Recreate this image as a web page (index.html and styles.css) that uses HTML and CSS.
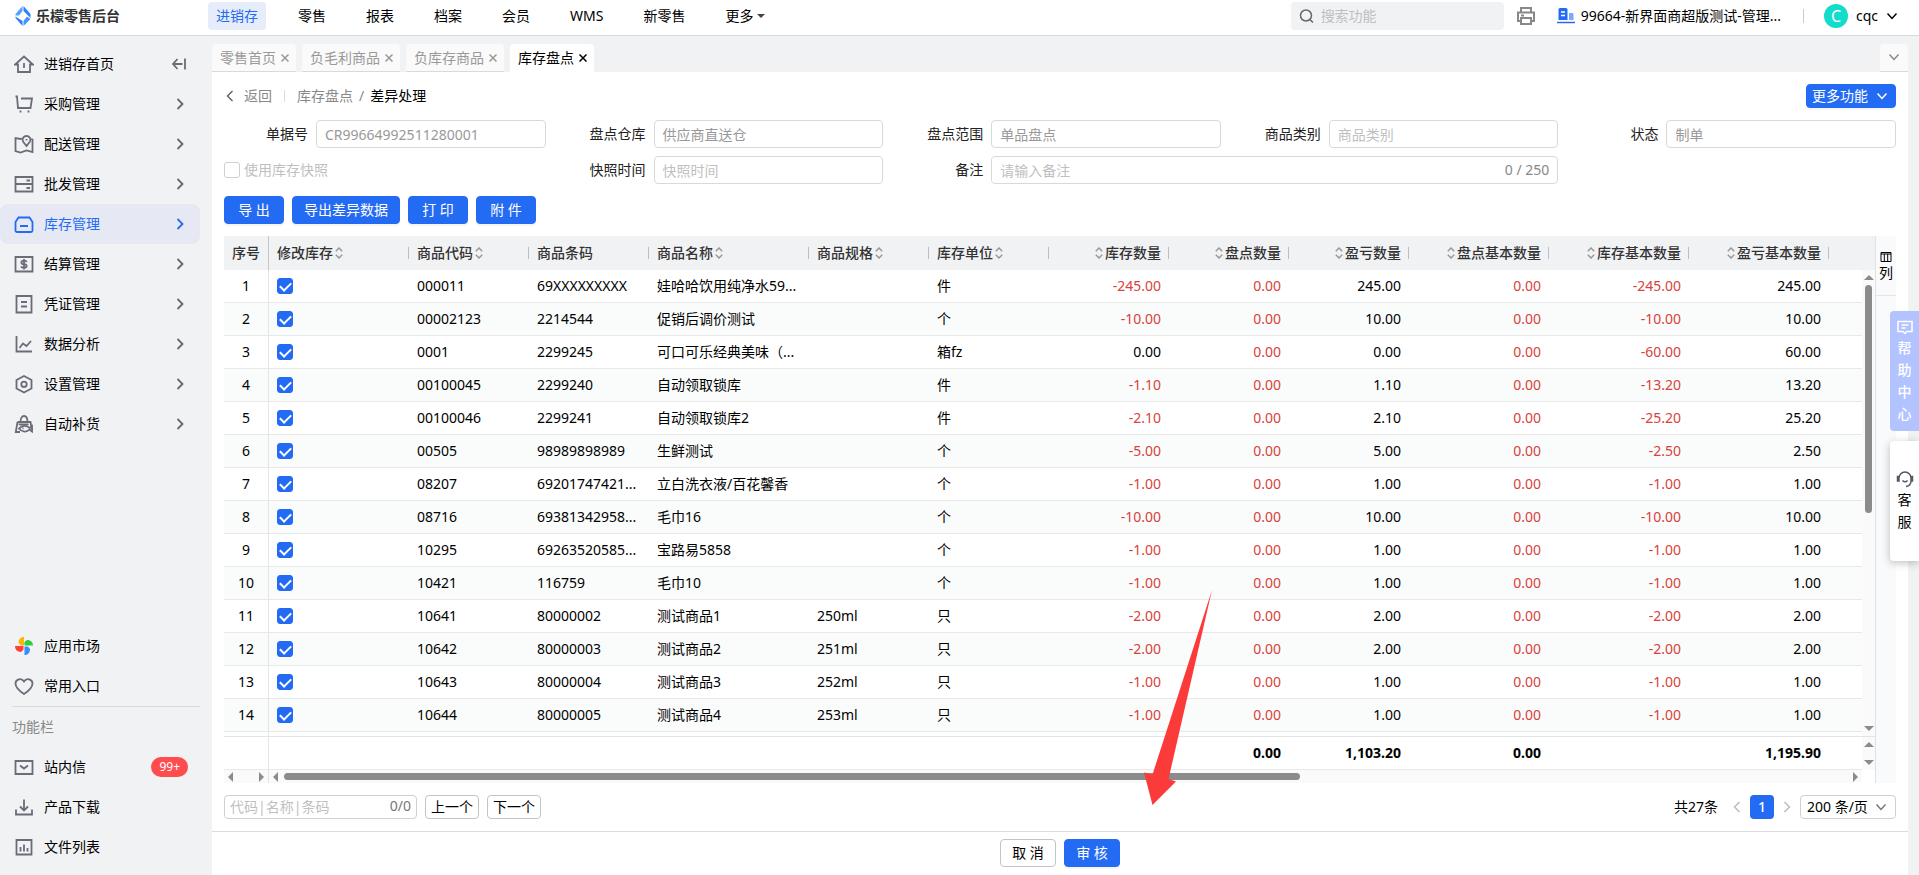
FILE: index.html
```html
<!DOCTYPE html>
<html lang="zh-CN">
<head>
<meta charset="utf-8">
<title>乐檬零售后台</title>
<link rel="stylesheet" href="styles.css">
</head>
<body>

<!-- 图标 -->
<svg class="sprite" aria-hidden="true">
    <symbol id="i-home" viewBox="0 0 20 20"><path d="M1 10.500h3V18h12v-7.500h3L10 2.500ZM10 9v5"/></symbol>
    <symbol id="i-cart" viewBox="0 0 20 20"><path d="M1.500 2.500H3L4 14H16.500L18 4.500H7"/><path d="M6.500 16.500v2M14.500 16.500v2"/></symbol>
    <symbol id="i-map" viewBox="0 0 20 20"><path d="M8 4.500 6.500 5 1.500 4v13l5 1.500 6-2 6 1.500V5.500L16.500 5M12.500 12 9 7.500C7.500 4.500 10 2 12.500 2S17.500 4.500 16 7.500L12.500 12ZM12.500 5v1.500"/></symbol>
    <symbol id="i-server" viewBox="0 0 20 20"><path d="M1.500 3h17v14.500h-17ZM1.500 10h17M12.500 6.500H16M12.500 14H16"/></symbol>
    <symbol id="i-box" viewBox="0 0 20 20"><path d="M4.500 3.500h11L18.500 8V16.500a1.500 1.500 0 0 1-1.500 1.500H3A1.500 1.500 0 0 1 1.500 16.500V8ZM6 12h8"/></symbol>
    <symbol id="i-money" viewBox="0 0 20 20"><path d="M1.500 3h17v14.500h-17ZM12.800 8c-.5-1-1.500-1.300-2.800-1.300-3.500 0-3.500 3.300 0 3.500 3.500.2 3.500 3.600 0 3.600-1.500 0-2.500-.5-3-1.500M10 5v10.500"/></symbol>
    <symbol id="i-doc" viewBox="0 0 20 20"><path d="M2.500 2h15v16.500h-15ZM7 8h6M7 12.500h6"/></symbol>
    <symbol id="i-chart" viewBox="0 0 20 20"><path d="M2.500 2v15.500H18M5.500 14 9 9.500l3.500 2.500L17 7"/></symbol>
    <symbol id="i-set" viewBox="0 0 20 20"><path d="M10 2l7.500 4v8.500L10 18.500 2.500 14.500V6Z"/><circle cx="10" cy="10.300" r="2.700"/></symbol>
    <symbol id="i-bag" viewBox="0 0 20 20"><path d="M3.500 8h13l1.500 8.500M3.500 8 1.800 18H6M6.500 8C6.500 0 13.500 0 13.500 8M5.500 11v-.5h9"/><path d="M5 14.500c3-3.500 8-3.500 10.500-.5l2.500-2v5.500l-2.500-2c-2.500 3-7.500 3-10.500-1ZM8.500 14.300h1"/></symbol>
    <symbol id="i-heart" viewBox="0 0 20 20"><path d="M10 18C4 14 1.500 11 1.500 7.500 1.500 3 7.500 1.500 10 5.500c2.500-4 8.500-2.500 8.500 2 0 3.500-2.500 6.500-8.500 10.500Z"/></symbol>
    <symbol id="i-mail" viewBox="0 0 20 20"><path d="M1.500 4h17v13h-17ZM6 8.500l4 3 4-3"/></symbol>
    <symbol id="i-down" viewBox="0 0 20 20"><path d="M10 2.500V13M6 9.500l4 4 4-4M2 12.500V17.500h16v-5"/></symbol>
    <symbol id="i-file" viewBox="0 0 20 20"><path d="M2.500 3h15v14.500h-15ZM6.500 10v4.500M10 7.500v7M13.500 11v3.500"/></symbol>
    <symbol id="i-right" viewBox="0 0 10 12"><path d="M2.500 1 7.500 6l-5 5"/></symbol>
    <symbol id="i-left" viewBox="0 0 10 12"><path d="M7.500 1l-5 5 5 5"/></symbol>
    <symbol id="i-bottom" viewBox="0 0 12 12"><path d="M1.500 3.500 6 8.500l4.500-5"/></symbol>
    <symbol id="i-x" viewBox="0 0 8 8"><path d="M.5.5l7 7M7.500.5l-7 7"/></symbol>
    <symbol id="i-sort" viewBox="0 0 8 12"><path d="M.8 4.200 4 1l3.200 3.200M.8 7.800 4 11l3.200-3.200"/></symbol>
</svg>

<header class="header">
    <div class="logo">
        <svg class="logo-icon" viewBox="0 0 16 20"><path fill="#55a2ff" d="M7.500 0v5L4 9.500H.5V8Z"/><path fill="#2f7ff8" d="M8.500 0 15.500 8v4L8.500 5Z"/><path fill="#2f7ff8" d="M.5 10.500 7.500 15v5L.5 12Z"/><path fill="#4496ff" d="M15.500 13 8.500 20v-5L12 10.500Z"/></svg>
        <strong>乐檬零售后台</strong>
    </div>
    <nav class="nav">
        <a href="#" class="active">进销存</a>
        <a href="#">零售</a>
        <a href="#">报表</a>
        <a href="#">档案</a>
        <a href="#">会员</a>
        <a href="#">WMS</a>
        <a href="#">新零售</a>
        <a href="#">更多<i class="caret"></i></a>
    </nav>
    <label class="search">
        <svg class="icon-16 line" viewBox="0 0 16 16"><circle cx="7" cy="7.500" r="5.500"/><path d="m11 11.500 3 3"/></svg>
        <input type="text" placeholder="搜索功能" aria-label="搜索功能">
    </label>
    <button class="printer" aria-label="打印"><svg viewBox="0 0 20 20"><path d="M5 6.500V2h10v4.500M5 15H2V6.500h16V15h-3M5 12h10v6H5ZM5 9.500h3"/></svg></button>
    <a href="#" class="org">
        <svg class="org-icon" viewBox="0 0 18 16"><path fill="#246bf3" d="M1.500 1.500Q1.500 0 3 0h6q1.500 0 1.500 1.500V12h-9Z"/><path stroke="#fff" stroke-width="1.500" d="M4 4h4M4 7.500h4"/><path fill="#7da8fa" d="M12 5h3.500q1 0 1 1v6H12Z"/><path stroke="#246bf3" stroke-width="1.500" d="M0 14.500h18"/></svg>
        99664-新界面商超版测试-管理...
    </a>
    <span class="header-line"></span>
    <button class="user"><span class="avatar">C</span>cqc<svg class="icon-12 line" aria-hidden="true"><use href="#i-bottom"/></svg></button>
</header>

<div class="layout">
    <aside class="side">
        <nav class="menu">
            <a href="#"><svg><use href="#i-home"/></svg>进销存首页<svg class="fold" viewBox="0 0 14 12"><path d="M5.500 1 1 6l4.500 5M1 6h9.500M13 .5v11"/></svg></a>
            <a href="#"><svg><use href="#i-cart"/></svg>采购管理<svg class="arrow"><use href="#i-right"/></svg></a>
            <a href="#"><svg><use href="#i-map"/></svg>配送管理<svg class="arrow"><use href="#i-right"/></svg></a>
            <a href="#"><svg><use href="#i-server"/></svg>批发管理<svg class="arrow"><use href="#i-right"/></svg></a>
            <a href="#" class="active"><svg><use href="#i-box"/></svg>库存管理<svg class="arrow"><use href="#i-right"/></svg></a>
            <a href="#"><svg><use href="#i-money"/></svg>结算管理<svg class="arrow"><use href="#i-right"/></svg></a>
            <a href="#"><svg><use href="#i-doc"/></svg>凭证管理<svg class="arrow"><use href="#i-right"/></svg></a>
            <a href="#"><svg><use href="#i-chart"/></svg>数据分析<svg class="arrow"><use href="#i-right"/></svg></a>
            <a href="#"><svg><use href="#i-set"/></svg>设置管理<svg class="arrow"><use href="#i-right"/></svg></a>
            <a href="#"><svg><use href="#i-bag"/></svg>自动补货<svg class="arrow"><use href="#i-right"/></svg></a>
        </nav>
        <nav class="menu menu-bottom">
            <a href="#"><svg class="market" viewBox="0 0 20 20"><path fill="#ffb400" d="M10 1v8.500H7L4.500 7C4.500 3 7 1 10 1Z"/><path fill="#2ecc40" d="M19 9.500h-8.500V6L13 4c4 0 6 2.500 6 5.500Z"/><path fill="#3d8bff" d="M10.500 19v-8.500H14l2 2.500c0 4-2.500 6-5.500 6Z"/><path fill="#ff4038" d="M1 10h8.500v3.500L7 16c-4 0-6-3-6-6Z"/></svg>应用市场</a>
            <a href="#"><svg><use href="#i-heart"/></svg>常用入口</a>
            <p class="menu-title">功能栏</p>
            <a href="#"><svg><use href="#i-mail"/></svg>站内信<span class="badge">99+</span></a>
            <a href="#"><svg><use href="#i-down"/></svg>产品下载</a>
            <a href="#"><svg><use href="#i-file"/></svg>文件列表</a>
        </nav>
    </aside>

    <main class="main">
        <div class="tabs">
            <a href="#">零售首页<svg><use href="#i-x"/></svg></a>
            <a href="#">负毛利商品<svg><use href="#i-x"/></svg></a>
            <a href="#">负库存商品<svg><use href="#i-x"/></svg></a>
            <a href="#" class="active">库存盘点<svg><use href="#i-x"/></svg></a>
            <button class="tabs-more" aria-label="更多标签"><svg class="icon-12 line"><use href="#i-bottom"/></svg></button>
        </div>

        <div class="panel">
            <div class="crumb">
                <a href="#" class="back"><svg><use href="#i-left"/></svg>返回</a>
                <span class="crumb-line"></span>
                <a href="#">库存盘点</a>
                <span>/</span>
                <b>差异处理</b>
                <button class="btn btn-primary btn-more">更多功能<svg class="icon-12 line"><use href="#i-bottom"/></svg></button>
            </div>

            <form class="form">
                <div class="field"><label for="no">单据号</label><input id="no" type="text" value="CR99664992511280001" disabled></div>
                <div class="field"><label for="store">盘点仓库</label><input id="store" type="text" value="供应商直送仓" disabled></div>
                <div class="field"><label for="range">盘点范围</label><input id="range" type="text" value="单品盘点" disabled></div>
                <div class="field"><label for="cate">商品类别</label><input id="cate" type="text" placeholder="商品类别" disabled></div>
                <div class="field"><label for="state">状态</label><input id="state" type="text" value="制单" disabled></div>
                <label class="snap"><input type="checkbox" disabled>使用库存快照</label>
                <div class="field"><label for="time">快照时间</label><input id="time" type="text" placeholder="快照时间" disabled></div>
                <div class="field field-wide"><label for="memo">备注</label><div class="counter"><input id="memo" type="text" placeholder="请输入备注"><span>0 / 250</span></div></div>
            </form>

            <div class="tools">
                <button class="btn btn-primary">导 出</button>
                <button class="btn btn-primary">导出差异数据</button>
                <button class="btn btn-primary">打 印</button>
                <button class="btn btn-primary">附 件</button>
            </div>

            <div class="grid">
                <div class="grid-main">
                    <div class="grid-view">
                        <table class="table">
                            <colgroup id="cols"></colgroup>
                            <thead><tr id="head"></tr></thead>
                            <tbody id="rows"></tbody>
                        </table>
                        <div class="vbar"><i class="tri up"></i><span class="thumb-v"></span><i class="tri down"></i></div>
                    </div>
                    <div class="grid-sum">
                        <table class="table">
                            <colgroup id="sumCols"></colgroup>
                            <tbody><tr id="sum"></tr></tbody>
                        </table>
                        <div class="vbar"><i class="tri up"></i><i class="tri down"></i></div>
                    </div>
                    <div class="hbar">
                        <div class="hbar-no"><i class="tri left"></i><i class="tri right"></i></div>
                        <div class="hbar-body"><i class="tri left"></i><div class="track"><span class="thumb-h"></span></div><i class="tri right"></i></div>
                    </div>
                </div>
                <div class="grid-side">
                    <button><svg viewBox="0 0 12 12"><path d="M1 1.500h10v9H1ZM1 3h10M4.300 3v7M7.700 3v7"/></svg>列</button>
                </div>
            </div>

            <div class="pager">
                <label class="find"><input type="text" placeholder="代码|名称|条码" aria-label="代码|名称|条码"><span>0/0</span></label>
                <button class="btn btn-small">上一个</button>
                <button class="btn btn-small">下一个</button>
                <span class="total">共27条</span>
                <button class="page-arrow" aria-label="上一页"><svg><use href="#i-left"/></svg></button>
                <button class="page-no">1</button>
                <button class="page-arrow" aria-label="下一页"><svg><use href="#i-right"/></svg></button>
                <div class="page-size">
                    <select aria-label="每页条数"><option>200 条/页</option></select>
                    <svg class="icon-12 line"><use href="#i-bottom"/></svg>
                </div>
            </div>
        </div>

        <footer class="footer">
            <button class="btn">取 消</button>
            <button class="btn btn-primary">审 核</button>
        </footer>
    </main>
</div>

<div class="float">
    <a href="#" class="help"><svg viewBox="0 0 18 18"><path d="M2 3.500h14v10h-5L9 15.500l-2-2H2ZM5.500 7h7M5.500 10h4"/></svg><span>帮</span><span>助</span><span>中</span><span>心</span></a>
    <a href="#" class="service"><svg viewBox="0 0 18 18"><path d="M3 11V8a6 6 0 0 1 12 0v3c0 3-2 5-5 5.500M3 6.500H1.500v4.500H3ZM15 6.500h1.500v4.500H15ZM6.500 10.500c1.500 1.500 3.500 1.500 5 0"/></svg><span>客</span><span>服</span></a>
</div>

<!-- 指向审核按钮的箭头 -->
<svg class="pointer" viewBox="0 0 32 215"><path fill="#fb3a3a" d="M68 0 24.500 189 32 191.500 8.500 215 0 182.500l8.500 2Z"/></svg>

<script src="script.js"></script>
</body>
</html>
```
FILE: styles.css
```css
*{
    box-sizing: border-box;
}
body{
    margin: 0;
    height: 100vh;
    display: flex;
    flex-direction: column;
    overflow: hidden;
    position: relative;
    background-color: #f1f2f4;
    color: #000;
    font-family: "Noto Sans", "Noto Sans CJK SC", sans-serif;
    font-size: 14px;
    line-height: 20px;
}
a{
    color: inherit;
    text-decoration: none;
}
button, input, select{
    font: inherit;
    color: inherit;
}
button{
    padding: 0;
    border: 0;
    background: none;
}
svg{
    flex: none;
    fill: none;
    stroke-width: 1.5;
}
.sprite{
    position: absolute;
    width: 0;
    height: 0;
}
.line{
    stroke: currentColor;
}
.icon-12{
    width: 12px;
    height: 12px;
}
.icon-16{
    width: 16px;
    height: 16px;
}

/*顶部*/
.header{
    flex: none;
    display: flex;
    align-items: center;
    height: 36px;
    padding: 0 21px 4px 15px;
    background-color: #fff;
    border-bottom: 1px solid #d9dadc;
}
.logo{
    display: flex;
    align-items: center;
    gap: 5px;
    width: 193px;
    color: #333;
}
.logo-icon{
    width: 16px;
    height: 20px;
}
.nav{
    display: flex;
    gap: 24px;
    flex: 1;
}
.nav a{
    display: flex;
    align-items: center;
    height: 28px;
    padding: 0 8px;
    border-radius: 4px;
}
.nav .active{
    background-color: #e7ecfb;
    color: #246bf3;
}
.caret{
    margin-left: 4px;
    border: 4px solid transparent;
    border-top-color: #444;
    border-bottom: 0;
}
.search{
    display: flex;
    align-items: center;
    gap: 6px;
    width: 213px;
    height: 28px;
    padding: 0 8px;
    border-radius: 4px;
    background-color: #f1f2f4;
    color: #666;
}
.search input{
    width: 100%;
    padding: 0;
    border: 0;
    outline: 0;
    background: none;
}
::placeholder{
    color: #bfbfbf;
    opacity: 1;
}
.printer{
    display: flex;
    margin: 0 21px 0 12px;
}
.printer svg{
    width: 20px;
    height: 20px;
    stroke: #888;
    stroke-width: 2;
}
.org{
    display: flex;
    align-items: center;
    gap: 6px;
}
.org-icon{
    width: 18px;
    height: 16px;
}
.header-line{
    width: 1px;
    height: 14px;
    margin: 0 20px 0 22px;
    background-color: #ccc;
}
.user{
    display: flex;
    align-items: center;
    gap: 8px;
}
.avatar{
    width: 24px;
    height: 24px;
    border-radius: 50%;
    background-color: #13dcca;
    color: #fff;
    font-size: 16px;
    line-height: 24px;
}

/*左侧菜单*/
.layout{
    flex: 1;
    display: flex;
    min-height: 0;
}
.side{
    flex: none;
    display: flex;
    flex-direction: column;
    justify-content: space-between;
    width: 212px;
    padding: 8px 12px 8px 0;
}
.menu a{
    display: flex;
    align-items: center;
    height: 40px;
    padding: 0 12px 0 14px;
    border-radius: 8px;
}
.menu svg{
    width: 20px;
    height: 20px;
    margin-right: 10px;
    stroke: #6b6c78;
    stroke-width: 1.8;
}
.menu .market{
    stroke: none;
}
.menu .arrow{
    width: 10px;
    height: 12px;
    margin: 0 3px 0 auto;
    stroke: #666;
}
.menu .fold{
    width: 14px;
    height: 12px;
    margin: 0 2px 0 auto;
}
.menu .active{
    background-color: #e6e9f4;
    color: #246bf3;
}
.menu .active svg{
    stroke: #246bf3;
}
.menu-title{
    margin: 0 0 0 12px;
    padding-top: 10px;
    height: 41px;
    border-top: 1px solid #d9dadc;
    color: #888;
}
.badge{
    margin-left: auto;
    padding: 0 8px;
    border-radius: 10px;
    background-color: #ff4d4f;
    color: #fff;
    font-size: 12px;
}

/*标签页*/
.main{
    flex: 1;
    display: flex;
    flex-direction: column;
    min-width: 0;
    padding: 8px 11px 0 0;
}
.tabs{
    display: flex;
    gap: 6px;
}
.tabs a{
    display: flex;
    align-items: center;
    gap: 5px;
    height: 28px;
    padding: 0 7px 0 8px;
    border-radius: 4px 4px 0 0;
    border-bottom: 1px solid #d9dadc;
    background-color: #fafafa;
    color: #999;
}
.tabs a svg{
    width: 8px;
    height: 8px;
    stroke: currentColor;
}
.tabs .active{
    background-color: #fff;
    border-color: #fff;
    color: #000;
}
.tabs-more{
    width: 28px;
    margin-left: auto;
    border-radius: 4px 4px 0 0;
    border-bottom: 1px solid #d9dadc;
    background-color: #fafafa;
    color: #888;
}

/*内容*/
.panel{
    flex: 1;
    display: flex;
    flex-direction: column;
    min-height: 0;
    padding: 12px;
    background-color: #fff;
}
.crumb{
    display: flex;
    align-items: center;
    gap: 6px;
    height: 24px;
    color: #888;
}
.crumb b{
    color: #000;
    font-weight: normal;
}
.back{
    display: flex;
    align-items: center;
    gap: 8px;
}
.back svg{
    width: 12px;
    height: 12px;
    stroke: #666;
}
.crumb-line{
    width: 1px;
    height: 12px;
    margin: 0 6px;
    background-color: #ddd;
}
.btn{
    min-width: 56px;
    height: 28px;
    padding: 0 11px;
    border: 1px solid #c4c4c4;
    border-radius: 4px;
    background-color: #fff;
}
.btn-primary{
    border-color: #246bf3;
    background-color: #246bf3;
    color: #fff;
    box-shadow: 0 2px 0 rgba(0,0,0,0.04);
}
.btn-more{
    display: flex;
    align-items: center;
    gap: 8px;
    height: 24px;
    margin-left: auto;
    padding: 0 7px 0 5px;
}
.form{
    display: grid;
    grid-template-columns: repeat(5, 1fr);
    gap: 8px 0;
    margin: 12px 0 12px -16px;
}
.field{
    display: flex;
    align-items: center;
}
.field label{
    flex: none;
    width: 108px;
    padding-right: 8px;
    text-align: right;
    color: #222;
}
.field input{
    flex: 1;
    width: 100%;
    min-width: 0;
    height: 28px;
    padding: 0 8px;
    border: 1px solid #d9d9d9;
    border-radius: 4px;
    background-color: #fff;
    color: #999;
}
.field-wide{
    grid-column: span 2;
}
.counter{
    flex: 1;
    display: flex;
    align-items: center;
    padding-right: 8px;
    border: 1px solid #d9d9d9;
    border-radius: 4px;
    color: #888;
}
.counter input{
    height: 26px;
    border: 0;
}
.snap{
    display: flex;
    align-items: center;
    gap: 4px;
    padding-left: 16px;
    color: #bfbfbf;
}
input[type=checkbox]{
    appearance: none;
    display: block;
    width: 16px;
    height: 16px;
    margin: 0;
    border: 1px solid #d0d0d0;
    border-radius: 3px;
    background-color: #fff;
}
input[type=checkbox]:checked{
    border-color: #246bf3;
    background-color: #246bf3;
}
/*对勾*/
input[type=checkbox]:checked::after{
    content: "";
    display: block;
    width: 5px;
    height: 9px;
    margin: 1px auto;
    border: solid #fff;
    border-width: 0 2px 2px 0;
    transform: rotate(45deg);
}
.tools{
    display: flex;
    gap: 8px;
}
.tools .btn{
    min-width: 60px;
}

/*表格*/
.grid{
    flex: 1;
    display: flex;
    min-height: 0;
    margin: 12px 0;
}
.grid-main{
    flex: 1;
    display: flex;
    flex-direction: column;
    min-width: 0;
}
.grid-view{
    flex: 1;
    display: flex;
    min-height: 0;
    overflow: hidden;
    background: linear-gradient(#f1f2f4 34px, #fff 34px);
}
.table{
    flex: 1;
    min-width: 0;
    table-layout: fixed;
    border-collapse: separate;
    border-spacing: 0;
}
.table th{
    height: 34px;
    padding: 0;
    background-color: #f1f2f4;
    color: #333;
    font-weight: 500;
    text-align: left;
}
.table th div{
    display: flex;
    align-items: center;
    gap: 2px;
    height: 12px;
    padding: 0 7px 0 8px;
    border-right: 1px solid #b9bec9;
    white-space: nowrap;
}
.table th svg{
    width: 8px;
    height: 12px;
    stroke: #999;
}
.table .num{
    text-align: right;
}
.table .num div{
    flex-direction: row-reverse;
}
.table td{
    height: 33px;
    padding: 0 8px;
    border-bottom: 1px solid #e8e8e8;
    white-space: nowrap;
    overflow: hidden;
    text-overflow: ellipsis;
}
.table tbody tr:nth-child(even){
    background-color: #fafcfb;
}
.table .no{
    padding: 0;
    border-right: 1px solid #e3e4e6;
    text-align: center;
}
.table th.no{
    border-color: #c4c6ca;
}
.table .no div{
    display: block;
    height: 20px;
    padding: 0;
    border: 0;
}
.table th:last-child div{
    border: 0;
}
.table .red{
    color: #d9413c;
}
.table .rest td{
    height: 4px;
    border-bottom: 0;
    background-color: #fff;
}
.grid-sum{
    display: flex;
    border-top: 1px solid #e3e4e6;
    font-weight: bold;
}
.vbar{
    flex: none;
    display: flex;
    flex-direction: column;
    justify-content: space-between;
    align-items: center;
    width: 13px;
    padding: 5px 0;
    background-color: #fafafa;
}
.grid-view .vbar{
    margin-top: 34px;
}
.thumb-v{
    width: 7px;
    height: 50%;
    margin: 5px 0 auto;
    border-radius: 4px;
    background-color: #8b8b8b;
}
.tri{
    border: 5px solid transparent;
}
.up{
    border-bottom-color: #8b8b8b;
    border-top: 0;
}
.down{
    border-top-color: #8b8b8b;
    border-bottom: 0;
}
.left{
    border-right-color: #8b8b8b;
    border-left: 0;
}
.right{
    border-left-color: #8b8b8b;
    border-right: 0;
}
.hbar{
    display: flex;
    height: 13px;
    margin-right: 13px;
    background-color: #fafafa;
}
.hbar-no{
    display: flex;
    justify-content: space-between;
    align-items: center;
    width: 45px;
    padding: 0 4px;
    border-right: 1px solid #e3e4e6;
}
.hbar-body{
    flex: 1;
    display: flex;
    align-items: center;
    gap: 6px;
    padding: 0 4px;
}
.track{
    flex: 1;
}
.thumb-h{
    display: block;
    width: 65%;
    height: 7px;
    border-radius: 4px;
    background-color: #8b8b8b;
}
.grid-side{
    flex: none;
    width: 21px;
    border-left: 1px solid #dfe1e5;
    background-color: #f9fafc;
}
.grid-side button{
    display: flex;
    flex-direction: column;
    align-items: center;
    width: 20px;
    height: 60px;
    padding-top: 15px;
    border-bottom: 1px solid #e3e4e6;
}
.grid-side svg{
    width: 12px;
    height: 12px;
    stroke: #000;
    stroke-width: 1;
}

/*分页*/
.pager{
    display: flex;
    align-items: center;
    gap: 8px;
}
.find{
    display: flex;
    width: 193px;
    height: 24px;
    padding: 0 5px;
    border: 1px solid #d0d0d0;
    border-radius: 4px;
    color: #777;
}
.find input{
    flex: 1;
    min-width: 0;
    padding: 0;
    border: 0;
    outline: 0;
}
.btn-small{
    height: 24px;
    min-width: 54px;
    padding: 0 5px;
}
.total{
    margin-left: auto;
    margin-right: 6px;
}
.page-arrow{
    display: flex;
}
.page-arrow svg{
    width: 10px;
    height: 12px;
    stroke: #bbb;
}
.page-no{
    width: 24px;
    height: 24px;
    border-radius: 4px;
    background-color: #246bf3;
    color: #fff;
    font-weight: 500;
}
.page-size{
    display: flex;
    align-items: center;
    width: 96px;
    height: 24px;
    padding: 0 8px 0 6px;
    border: 1px solid #d0d0d0;
    border-radius: 4px;
    color: #777;
}
.page-size select{
    flex: 1;
    min-width: 0;
    appearance: none;
    padding: 0;
    border: 0;
    background: none;
    color: #000;
}
.footer{
    display: flex;
    justify-content: center;
    gap: 8px;
    padding: 7px 0 8px;
    border-top: 1px solid #dcdcdc;
    background-color: #fff;
}

/*右侧悬浮*/
.float{
    position: absolute;
    top: 311px;
    right: 0;
    display: flex;
    flex-direction: column;
    gap: 10px;
}
.float a{
    display: flex;
    flex-direction: column;
    align-items: center;
    justify-content: center;
    gap: 2px;
    width: 29px;
    height: 120px;
    border-radius: 4px 0 0 4px;
}
.float svg{
    width: 18px;
    height: 18px;
    stroke: currentColor;
}
.help{
    background-color: #b2c3ff;
    color: #fff;
    font-weight: 500;
}
.service{
    background-color: #fff;
    box-shadow: 0 2px 8px rgba(0,0,0,0.25);
}
.float .service svg{
    stroke: #555763;
}
.pointer{
    position: absolute;
    left: 1144px;
    top: 590px;
    width: 32px;
    height: 215px;
    overflow: visible;
    pointer-events: none;
}
```
FILE: script.js
```js
/*表头: 名称, 列宽, 类型, 是否排序*/
var heads = [
    ["序号", 45, "no", 0],
    ["修改库存", 140, "", 1],
    ["商品代码", 120, "", 1],
    ["商品条码", 120, "", 0],
    ["商品名称", 160, "", 1],
    ["商品规格", 120, "", 1],
    ["库存单位", 120, "", 1],
    ["库存数量", 120, "num", 1],
    ["盘点数量", 120, "num", 1],
    ["盈亏数量", 120, "num", 1],
    ["盘点基本数量", 140, "num", 1],
    ["库存基本数量", 140, "num", 1],
    ["盈亏基本数量", 140, "num", 1],
    ["", 0, "", 0]
];
/*代码, 条码, 名称, 规格, 单位, 库存数量, 盈亏数量, 库存基本数量, 盈亏基本数量*/
var goods = [
    ["000011", "69XXXXXXXXX", "娃哈哈饮用纯净水59...", "", "件", "-245.00", "245.00", "-245.00", "245.00"],
    ["00002123", "2214544", "促销后调价测试", "", "个", "-10.00", "10.00", "-10.00", "10.00"],
    ["0001", "2299245", "可口可乐经典美味（...", "", "箱fz", "0.00", "0.00", "-60.00", "60.00"],
    ["00100045", "2299240", "自动领取锁库", "", "件", "-1.10", "1.10", "-13.20", "13.20"],
    ["00100046", "2299241", "自动领取锁库2", "", "件", "-2.10", "2.10", "-25.20", "25.20"],
    ["00505", "98989898989", "生鲜测试", "", "个", "-5.00", "5.00", "-2.50", "2.50"],
    ["08207", "69201747421...", "立白洗衣液/百花馨香", "", "个", "-1.00", "1.00", "-1.00", "1.00"],
    ["08716", "69381342958...", "毛巾16", "", "个", "-10.00", "10.00", "-10.00", "10.00"],
    ["10295", "69263520585...", "宝路易5858", "", "个", "-1.00", "1.00", "-1.00", "1.00"],
    ["10421", "116759", "毛巾10", "", "个", "-1.00", "1.00", "-1.00", "1.00"],
    ["10641", "80000002", "测试商品1", "250ml", "只", "-2.00", "2.00", "-2.00", "2.00"],
    ["10642", "80000003", "测试商品2", "251ml", "只", "-2.00", "2.00", "-2.00", "2.00"],
    ["10643", "80000004", "测试商品3", "252ml", "只", "-1.00", "1.00", "-1.00", "1.00"],
    ["10644", "80000005", "测试商品4", "253ml", "只", "-1.00", "1.00", "-1.00", "1.00"]
];
var sums = ["", "", "", "", "", "", "", "", "0.00", "1,103.20", "0.00", "", "1,195.90", ""];

var cols = "", head = "", rows = "", sum = "", rest = "";
for(var i = 0;i < heads.length;i++){
    var h = heads[i];
    var sort = h[3] ? '<svg><use href="#i-sort"/></svg>' : '';
    cols += h[1] ? '<col style="width:' + h[1] + 'px">' : '<col>';
    head += '<th class="' + h[2] + '"><div>' + h[0] + sort + '</div></th>';
    sum += '<td class="' + h[2] + '">' + sums[i] + '</td>';
    rest += '<td class="' + h[2] + '"></td>';
}
function num(v, red){
    return '<td class="num' + (red || v.charAt(0) == "-" ? ' red' : '') + '">' + v + '</td>';
}
for(var i = 0;i < goods.length;i++){
    var g = goods[i];
    rows += '<tr><td class="no">' + (i + 1) + '</td>';
    rows += '<td><input type="checkbox" aria-label="修改库存" checked></td>';
    for(var j = 0;j < 5;j++){
        rows += '<td>' + g[j] + '</td>';
    }
    rows += num(g[5]) + num("0.00", true) + num(g[6]) + num("0.00", true) + num(g[7]) + num(g[8]) + '<td></td></tr>';
}
rows += '<tr class="rest">' + rest + '</tr>';

document.getElementById("cols").innerHTML = cols;
document.getElementById("sumCols").innerHTML = cols;
document.getElementById("head").innerHTML = head;
document.getElementById("rows").innerHTML = rows;
document.getElementById("sum").innerHTML = sum;
```
